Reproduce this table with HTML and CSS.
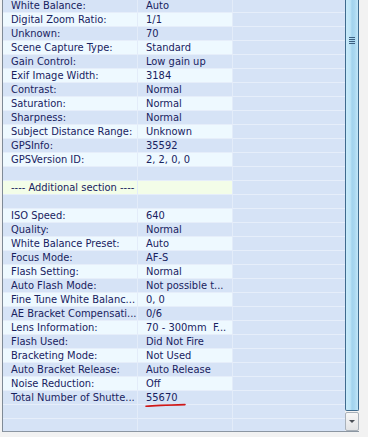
FILE: index.html
```html
<!DOCTYPE html>
<html>
<head>
<meta charset="utf-8">
<title>EXIF properties</title>
<link rel="stylesheet" href="styles.css">
</head>
<body>
<div class="list">
  <div class="view">
    <div class="rows">
      <div class="row"><div class="c">White Balance:</div><div class="c">Auto</div><div class="c"></div></div>
      <div class="row alt"><div class="c">Digital Zoom Ratio:</div><div class="c">1/1</div><div class="c"></div></div>
      <div class="row"><div class="c">Unknown:</div><div class="c">70</div><div class="c"></div></div>
      <div class="row alt"><div class="c">Scene Capture Type:</div><div class="c">Standard</div><div class="c"></div></div>
      <div class="row"><div class="c">Gain Control:</div><div class="c">Low gain up</div><div class="c"></div></div>
      <div class="row alt"><div class="c">Exif Image Width:</div><div class="c">3184</div><div class="c"></div></div>
      <div class="row"><div class="c">Contrast:</div><div class="c">Normal</div><div class="c"></div></div>
      <div class="row alt"><div class="c">Saturation:</div><div class="c">Normal</div><div class="c"></div></div>
      <div class="row"><div class="c">Sharpness:</div><div class="c">Normal</div><div class="c"></div></div>
      <div class="row alt"><div class="c">Subject Distance Range:</div><div class="c">Unknown</div><div class="c"></div></div>
      <div class="row"><div class="c">GPSInfo:</div><div class="c">35592</div><div class="c"></div></div>
      <div class="row alt"><div class="c">GPSVersion ID:</div><div class="c">2, 2, 0, 0</div><div class="c"></div></div>
      <div class="row"><div class="c"></div><div class="c"></div><div class="c"></div></div>
      <div class="row section"><div class="c">---- Additional section ----</div><div class="c"></div><div class="c"></div></div>
      <div class="row"><div class="c"></div><div class="c"></div><div class="c"></div></div>
      <div class="row alt"><div class="c">ISO Speed:</div><div class="c">640</div><div class="c"></div></div>
      <div class="row"><div class="c">Quality:</div><div class="c">Normal</div><div class="c"></div></div>
      <div class="row alt"><div class="c">White Balance Preset:</div><div class="c">Auto</div><div class="c"></div></div>
      <div class="row"><div class="c">Focus Mode:</div><div class="c">AF-S</div><div class="c"></div></div>
      <div class="row alt"><div class="c">Flash Setting:</div><div class="c">Normal</div><div class="c"></div></div>
      <div class="row"><div class="c">Auto Flash Mode:</div><div class="c">Not possible t...</div><div class="c"></div></div>
      <div class="row alt"><div class="c">Fine Tune White Balanc...</div><div class="c">0, 0</div><div class="c"></div></div>
      <div class="row"><div class="c">AE Bracket Compensati...</div><div class="c">0/6</div><div class="c"></div></div>
      <div class="row alt"><div class="c">Lens Information:</div><div class="c">70 - 300mm&nbsp; F...</div><div class="c"></div></div>
      <div class="row"><div class="c">Flash Used:</div><div class="c">Did Not Fire</div><div class="c"></div></div>
      <div class="row alt"><div class="c">Bracketing Mode:</div><div class="c">Not Used</div><div class="c"></div></div>
      <div class="row"><div class="c">Auto Bracket Release:</div><div class="c">Auto Release</div><div class="c"></div></div>
      <div class="row alt"><div class="c">Noise Reduction:</div><div class="c">Off</div><div class="c"></div></div>
      <div class="row"><div class="c">Total Number of Shutte...</div><div class="c mark">55670<svg class="underline" width="44" height="6" viewBox="0 0 44 6"><path d="M1 4.2 C10 3.4 24 3 40 2.6" fill="none" stroke="#d01818" stroke-width="1.6" stroke-linecap="round"/></svg></div><div class="c"></div></div>
      <div class="row empty"><div class="c"></div><div class="c"></div><div class="c"></div></div>
      <div class="row empty"><div class="c"></div><div class="c"></div><div class="c"></div></div>
    </div>
  </div>
  <div class="vscroll">
    <div class="thumb"><div class="grip"><i></i><i></i><i></i><i></i></div></div>
    <div class="btn-down"><span class="arrow"></span></div>
  </div>
</div>
</body>
</html>
```

FILE: styles.css
```css
html, body {
  margin: 0;
  padding: 0;
  background: #f2f2f2;
}

body {
  width: 368px;
  height: 437px;
  overflow: hidden;
  font-family: "DejaVu Sans", "Liberation Sans", sans-serif;
  font-stretch: condensed;
  font-size: 11px;
  color: #18225f;
}

.list {
  display: flex;
  margin-left: 2px;
  width: 356px;
  height: 431px;
  border-left: 1px solid #7f8a96;
  border-bottom: 1px solid #8b96a2;
}

.view {
  flex: 1;
  overflow: hidden;
  background: #d6e3f6;
}

/* list is scrolled a pixel into its first visible row */
.rows {
  margin-top: -1px;
}

.row {
  display: grid;
  grid-template-columns: 135px 95px 1fr;
  height: 14px;
}

.c {
  height: 13px;
  line-height: 13px;
  padding-left: 8px;
  white-space: nowrap;
  overflow: hidden;
  border-bottom: 1px solid #e6eefa;
  border-right: 1px solid #e3ecf9;
}

.c:last-child {
  border-right: none;
}

.row.alt .c:nth-child(-n+2) {
  background: #eef9ff;
}

.row.section .c:nth-child(-n+2) {
  background: #f3fde8;
}

.row.section .c:first-child {
  overflow: visible;
}

.mark {
  position: relative;
  overflow: visible;
}

.underline {
  position: absolute;
  left: 7px;
  top: 11px;
}

/* vertical scrollbar */
.vscroll {
  width: 14px;
  display: flex;
  flex-direction: column;
}

.thumb {
  flex: 1;
  border: 1px solid #3f6b8e;
  border-top: none;
  border-radius: 0 0 2px 2px;
  background: linear-gradient(to right, #c9ebfa 0%, #bde4f7 35%, #a2d3ee 50%, #a9d7f0 70%, #c2e6f8 100%);
  padding-top: 37px;
}

.grip {
  display: flex;
  flex-direction: column;
  gap: 1px;
  align-items: center;
}

.grip i {
  display: block;
  width: 6px;
  height: 1px;
  background: #3c5f80;
}

.btn-down {
  height: 19px;
  margin-top: 1px;
  border: 1px solid #a9b1ba;
  border-radius: 2px;
  background: linear-gradient(to bottom, #f7f7f7, #e2e3e5);
  box-sizing: border-box;
  display: flex;
  align-items: center;
  justify-content: center;
}

.arrow {
  width: 0;
  height: 0;
  border-left: 3px solid transparent;
  border-right: 3px solid transparent;
  border-top: 3px solid #4a4f56;
}
```
